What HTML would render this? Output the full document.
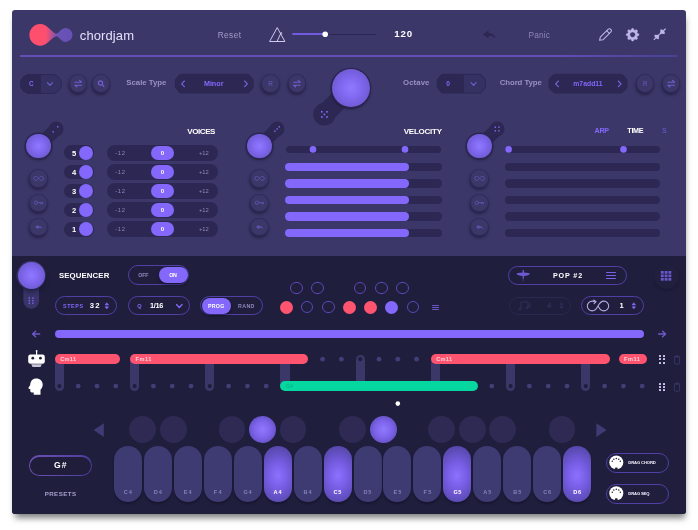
<!DOCTYPE html>
<html><head><meta charset="utf-8"><title>chordjam</title>
<style>
html,body{margin:0;padding:0;background:#fff;}
body{width:698px;height:530px;position:relative;overflow:hidden;font-family:"Liberation Sans",sans-serif;}
#win{position:absolute;left:12px;top:10px;width:674px;height:504px;background:#3b3768;border-radius:3px;box-shadow:1px 6px 6px -2px rgba(0,0,0,.5);overflow:hidden;}
#c{position:absolute;left:-12px;top:-10px;width:698px;height:530px;will-change:transform;}
#c div,#c svg{position:absolute;box-sizing:border-box;}
.t{white-space:nowrap;}
.pill{border-radius:20px;}
.ib{border-radius:50%;background:#3b3768;border:1.6px solid #2f2b59;box-shadow:-0.5px 2px 3px rgba(22,19,50,.6);}
.knob{border-radius:50%;background:radial-gradient(circle at 50% 50%,#9078ff 0%,#8269f2 35%,#6f5ad2 75%,#604eb9 100%);box-shadow:0 0 0 1.2px #2a2650,0 2px 3px rgba(20,18,45,.6);}
.key{border-radius:14px;background:#3e3a72;box-shadow:0 2px 2px rgba(15,13,35,.5);}
.key.on{background:radial-gradient(ellipse 78% 52% at 50% 53%,#8d71ff 0%,#775de4 45%,#5748ac 100%);}
.bk{border-radius:50%;background:#2e2a53;}
.bk.on{background:radial-gradient(circle at 50% 50%,#9179ff 0%,#7c63ea 45%,#5443a8 100%);}
</style></head><body><div id="win"><div id="c">

<svg style="left:26px;top:22px" width="50" height="26" viewBox="26 22 50 26">
<defs><linearGradient id="lg" x1="0" x2="1" y1="0" y2="0"><stop offset="0" stop-color="#ff4f6e"/><stop offset="0.38" stop-color="#ff4f6e"/><stop offset="0.66" stop-color="#6a52b8"/><stop offset="1" stop-color="#6750b4"/></linearGradient></defs>
<path d="M40.200 24.100 A10.800 10.800 0 1 0 40.200 45.700 C47.500 45.700 50.500 38.200 55.500 36.400 C59 35.300 60.300 41.900 65.500 41.900 A7 7 0 1 0 65.500 27.900 C60.300 27.900 59 34.500 55.500 33.400 C50.500 31.600 47.500 24.100 40.200 24.100 Z" fill="url(#lg)"/>
</svg>
<div class="t" style="left:79.8px;top:27.6px;height:15.6px;line-height:15.6px;font-size:13px;color:#e4dffa;font-weight:400;letter-spacing:0.10px;">chordjam</div>
<div class="t" style="left:217.7px;top:29.6px;height:10.0px;line-height:10.0px;font-size:8.3px;color:#a39dca;font-weight:400;letter-spacing:0.41px;">Reset</div>
<svg style="left:267px;top:25px" width="20" height="18" viewBox="267 25 20 18"><g fill="none" stroke="#d6d0f2" stroke-width="0.950" stroke-linejoin="round"><path d="M277.200 27.600 L269.600 41.500 L284.900 41.500 Z"/><path d="M281.400 32 L277 41.500"/><path d="M280.600 34.200 L282.200 33.500"/></g></svg>
<div style="left:292.0px;top:33.6px;width:84.0px;height:1.5px;background:#2b2752;border-radius:1px;"></div>
<div style="left:292.0px;top:33.3px;width:33.0px;height:2.0px;background:#705adf;border-radius:1px;"></div>
<svg style="left:321px;top:30px" width="9" height="9" viewBox="321 30 9 9"><circle cx="325.2" cy="34.2" r="2.8" fill="#fff"/></svg>
<div class="t" style="left:394.2px;top:28.4px;height:11.6px;line-height:11.6px;font-size:9.7px;color:#fff;font-weight:700;letter-spacing:0.90px;">120</div>
<svg style="left:481px;top:29px" width="17" height="11" viewBox="481 29 17 11"><path d="M488.500 30.500 L482.700 34.500 L488.500 38.300 L488.500 35.800 C491.500 35.600 493.500 36.300 495.700 38.300 C494.800 35 492.500 33.200 488.500 33 Z" fill="#2b2752"/></svg>
<div class="t" style="left:528.5px;top:29.5px;height:10.0px;line-height:10.0px;font-size:8.3px;color:#8d87b8;font-weight:400;letter-spacing:0.16px;">Panic</div>
<svg style="left:597px;top:27px" width="17" height="16" viewBox="597 27 17 16"><g fill="none" stroke="#bdb5ea" stroke-width="1.1" stroke-linejoin="round" stroke-linecap="round"><path d="M599.600 40.300 L600.300 37.200 L608.300 29.200 a1.6 1.6 0 0 1 2.300 0 l0.300 0.300 a1.6 1.6 0 0 1 0 2.300 L602.900 39.800 Z"/><path d="M606.800 30.800 L609.300 33.300"/></g></svg>
<svg style="left:624px;top:26px" width="18" height="18" viewBox="624 26 18 18"><path d="M638.87,34.08 L638.87,35.32 L637.29,36.12 L636.92,37.01 L637.47,38.70 L636.60,39.57 L634.91,39.02 L634.02,39.39 L633.22,40.97 L631.98,40.97 L631.18,39.39 L630.29,39.02 L628.60,39.57 L627.73,38.70 L628.28,37.01 L627.91,36.12 L626.33,35.32 L626.33,34.08 L627.91,33.28 L628.28,32.39 L627.73,30.70 L628.60,29.83 L630.29,30.38 L631.18,30.01 L631.98,28.43 L633.22,28.43 L634.02,30.01 L634.91,30.38 L636.60,29.83 L637.47,30.70 L636.92,32.39 L637.29,33.28Z M632.600 31.900 a2.800 2.800 0 1 0 0.001 0 Z" fill="#bdb5ea" fill-rule="evenodd" stroke="#bdb5ea" stroke-width="0.6" stroke-linejoin="round"/></svg>
<svg style="left:652px;top:27px" width="16" height="16" viewBox="652 27 16 16"><g fill="#bdb5ea"><path d="M659.600 34.300 L665.600 28.800" stroke="#bdb5ea" stroke-width="1.200"/><path d="M659.600 34.300 L653.800 39.900" stroke="#bdb5ea" stroke-width="1.200"/><path d="M660.200 33.700 L660.400 29.400 L662.200 29.600 L664.800 32 L664.600 33.900 Z"/><path d="M659 34.900 L658.800 39.200 L657 39 L654.400 36.600 L654.600 34.700 Z"/></g></svg>
<div style="left:20.0px;top:55.3px;width:658.0px;height:2.0px;background:linear-gradient(90deg,#644fba 0%,#644fba 80%,#4a4090 100%);border-radius:1px;"></div>
<div style="left:20.0px;top:74.0px;width:42.0px;height:19.6px;background:#353162;border-radius:10px;border:1px solid #2c2853;"></div>
<div style="left:20.0px;top:74.0px;width:21.0px;height:19.6px;background:#2c2853;border-radius:10px 0 0 10px;"></div>
<div class="t" style="left:-68.7px;width:200px;text-align:center;top:80.1px;height:7.7px;line-height:7.7px;font-size:6.4px;color:#8468fb;font-weight:700;letter-spacing:0px;">C</div>
<svg style="left:44px;top:78px" width="12" height="12" viewBox="44 78 12 12"><path d="M47.5 82.7 L50.0 85.3 L52.5 82.7" fill="none" stroke="#6f5fd0" stroke-width="1.2" stroke-linecap="round" stroke-linejoin="round"/></svg>
<div class="ib" style="left:68.9px;top:74.4px;width:18.6px;height:18.6px;"></div>
<svg style="left:72px;top:77px" width="12" height="12" viewBox="72 77 12 12"><g fill="none" stroke="#6f5fd0" stroke-width="1.1" stroke-linecap="round" stroke-linejoin="round"><path d="M74.9 82.2 H81.5 M79.5 80.4 L81.5 82.2"/><path d="M81.5 85.2 H74.9 M76.9 87.0 L74.9 85.2"/></g></svg>
<div class="ib" style="left:91.9px;top:74.4px;width:18.6px;height:18.6px;"></div>
<svg style="left:95px;top:77px" width="13" height="13" viewBox="95 77 13 13"><g fill="none" stroke="#6f5fd0" stroke-width="1.2" stroke-linecap="round"><circle cx="100.500" cy="83" r="2.100"/><path d="M102.200 84.700 L104 86.600"/></g></svg>
<div class="t" style="left:126.3px;top:78.3px;height:9.4px;line-height:9.4px;font-size:7.8px;color:#9791c3;font-weight:700;letter-spacing:0.00px;">Scale Type</div>
<svg style="left:173px;top:72px" width="82" height="22" viewBox="173 72 82 22"><path d="M176.8 80.3 L180.6 75.7 L248.0 75.7 L251.8 80.3 L251.8 86.8 L248.0 91.4 L180.6 91.4 L176.8 86.8Z" fill="#2c2853" stroke="#2c2853" stroke-width="4.0" stroke-linejoin="round"/></svg>
<svg style="left:177px;top:77px" width="12" height="12" viewBox="177 77 12 12"><path d="M184.4 81.0 L181.6 83.8 L184.4 86.6" fill="none" stroke="#7564de" stroke-width="1.15" stroke-linecap="round" stroke-linejoin="round"/></svg>
<svg style="left:240px;top:77px" width="12" height="12" viewBox="240 77 12 12"><path d="M244.6 81.0 L247.4 83.8 L244.6 86.6" fill="none" stroke="#7564de" stroke-width="1.15" stroke-linecap="round" stroke-linejoin="round"/></svg>
<div class="t" style="left:203.9px;top:79.5px;height:8.6px;line-height:8.6px;font-size:7.2px;color:#8468fb;font-weight:700;letter-spacing:0.00px;">Minor</div>
<div class="ib" style="left:261.2px;top:74.4px;width:18.6px;height:18.6px;"></div>
<div class="t" style="left:170.6px;width:200px;text-align:center;top:79.9px;height:7.8px;line-height:7.8px;font-size:6.5px;color:#5a4fa3;font-weight:700;letter-spacing:0px;">R</div>
<div class="ib" style="left:287.6px;top:74.4px;width:18.6px;height:18.6px;"></div>
<svg style="left:290px;top:77px" width="12" height="12" viewBox="290 77 12 12"><g fill="none" stroke="#6f5fd0" stroke-width="1.1" stroke-linecap="round" stroke-linejoin="round"><path d="M293.6 82.2 H300.2 M298.2 80.4 L300.2 82.2"/><path d="M300.2 85.2 H293.6 M295.6 87.0 L293.6 85.2"/></g></svg>
<svg style="left:300px;top:60px" width="80" height="70" viewBox="300 60 80 70"><path d="M350.700 88.200 L324.400 114.400" stroke="#2c2853" stroke-width="19.500" stroke-linecap="round"/><circle cx="324.400" cy="114.300" r="11.200" fill="#2c2853"/><circle cx="350.700" cy="88.400" r="20.300" fill="#2a2650"/><g fill="#8468fb"><rect x="321" y="111" width="1.600" height="1.600"/><rect x="326.200" y="111" width="1.600" height="1.600"/><rect x="323.600" y="113.600" width="1.600" height="1.600"/><rect x="321" y="116.200" width="1.600" height="1.600"/><rect x="326.200" y="116.200" width="1.600" height="1.600"/></g></svg>
<div class="knob" style="left:331.7px;top:69.2px;width:38.0px;height:38.0px;"></div>
<div class="t" style="left:403.0px;top:78.3px;height:9.4px;line-height:9.4px;font-size:7.8px;color:#9791c3;font-weight:700;letter-spacing:0.08px;">Octave</div>
<svg style="left:435px;top:72px" width="52" height="22" viewBox="435 72 52 22"><path d="M438.7 80.3 L442.5 75.7 L480.0 75.7 L483.8 80.3 L483.8 86.8 L480.0 91.4 L442.5 91.4 L438.7 86.8Z" fill="#2c2853" stroke="#2c2853" stroke-width="4.0" stroke-linejoin="round"/><defs><mask id="hx1"><path d="M438.7 80.3 L442.5 75.7 L480.0 75.7 L483.8 80.3 L483.8 86.8 L480.0 91.4 L442.5 91.4 L438.7 86.8Z" fill="#fff" stroke="#fff" stroke-width="2.0" stroke-linejoin="round"/></mask></defs><rect x="463.8" y="73.7" width="22.0" height="19.700000000000003" fill="#353162" mask="url(#hx1)"/></svg>
<div class="t" style="left:348.0px;width:200px;text-align:center;top:79.9px;height:7.9px;line-height:7.9px;font-size:6.6px;color:#8468fb;font-weight:700;letter-spacing:0px;">0</div>
<svg style="left:467px;top:78px" width="12" height="12" viewBox="467 78 12 12"><path d="M471.1 82.7 L473.6 85.3 L476.1 82.7" fill="none" stroke="#6f5fd0" stroke-width="1.2" stroke-linecap="round" stroke-linejoin="round"/></svg>
<div class="t" style="left:499.7px;top:78.3px;height:9.4px;line-height:9.4px;font-size:7.8px;color:#9791c3;font-weight:700;letter-spacing:-0.07px;">Chord Type</div>
<svg style="left:547px;top:72px" width="82" height="22" viewBox="547 72 82 22"><path d="M551.7 80.3 L555.3 76.9 L620.7 76.9 L624.3 80.3 L624.3 86.8 L620.7 90.2 L555.3 90.2 L551.7 86.8Z" fill="#2c2853" stroke="#2c2853" stroke-width="6.4" stroke-linejoin="round"/></svg>
<svg style="left:551px;top:77px" width="12" height="12" viewBox="551 77 12 12"><path d="M558.4 81.0 L555.6 83.8 L558.4 86.6" fill="none" stroke="#7564de" stroke-width="1.15" stroke-linecap="round" stroke-linejoin="round"/></svg>
<svg style="left:613px;top:77px" width="12" height="12" viewBox="613 77 12 12"><path d="M618.3 81.0 L621.1 83.8 L618.3 86.6" fill="none" stroke="#7564de" stroke-width="1.15" stroke-linecap="round" stroke-linejoin="round"/></svg>
<div class="t" style="left:573.3px;top:79.7px;height:8.2px;line-height:8.2px;font-size:6.8px;color:#8468fb;font-weight:700;letter-spacing:0.03px;">m7add11</div>
<div class="ib" style="left:635.6px;top:74.4px;width:18.6px;height:18.6px;"></div>
<div class="t" style="left:545.0px;width:200px;text-align:center;top:79.9px;height:7.8px;line-height:7.8px;font-size:6.5px;color:#5a4fa3;font-weight:700;letter-spacing:0px;">R</div>
<div class="ib" style="left:661.9px;top:74.4px;width:18.6px;height:18.6px;"></div>
<svg style="left:665px;top:77px" width="12" height="12" viewBox="665 77 12 12"><g fill="none" stroke="#6f5fd0" stroke-width="1.1" stroke-linecap="round" stroke-linejoin="round"><path d="M667.9 82.2 H674.5 M672.5 80.4 L674.5 82.2"/><path d="M674.5 85.2 H667.9 M669.9 87.0 L667.9 85.2"/></g></svg>
<svg style="left:18px;top:115px" width="50" height="50" viewBox="18 115 50 50"><path d="M38.6 146.2 L56.2 129" stroke="#2c2853" stroke-width="13.200" stroke-linecap="round"/><circle cx="56.2" cy="129" r="7.400" fill="#2c2853"/><g fill="#8468fb"><rect x="57.0" y="126.1" width="1.400" height="1.400"/><rect x="52.5" y="131.1" width="1.400" height="1.400"/></g></svg>
<div class="knob" style="left:26.4px;top:134.0px;width:24.4px;height:24.4px;box-shadow:0 0 0 1.600px #2a2650,0 2px 3px rgba(20,18,45,.6);"></div>
<div class="ib" style="left:29.4px;top:169.2px;width:18.4px;height:18.4px;"></div>
<div class="ib" style="left:29.4px;top:193.5px;width:18.4px;height:18.4px;"></div>
<div class="ib" style="left:29.4px;top:218.0px;width:18.4px;height:18.4px;"></div>
<svg style="left:31px;top:173px" width="14" height="10" viewBox="31 173 14 10"><path d="M38.6 178.4 c1 -1.300 1.700 -2 2.800 -2 a2 2 0 0 1 0 4 c-1.100 0 -1.800 -0.700 -2.800 -2 c-1 -1.300 -1.700 -2 -2.800 -2 a2 2 0 0 0 0 4 c1.100 0 1.800 -0.700 2.800 -2z" fill="none" stroke="#5d53ad" stroke-width="0.9"/></svg>
<svg style="left:31px;top:197px" width="14" height="10" viewBox="31 197 14 10"><g fill="none" stroke="#5d53ad" stroke-width="0.9" stroke-linecap="round"><circle cx="36.0" cy="202.7" r="1.700"/><path d="M37.7 202.7 H42.8 M40.8 202.7 v1.300 M42.4 202.7 v1.300"/></g></svg>
<svg style="left:31px;top:222px" width="14" height="10" viewBox="31 222 14 10"><path d="M38.3 224.8 L35.0 227.0 L38.3 229.2 L38.3 227.7 C40.1 227.6 41.2 228.0 42.4 229.1 C41.9 227.2 40.6 226.2 38.3 226.1 Z" fill="#5d53ad"/></svg>
<svg style="left:239px;top:115px" width="50" height="50" viewBox="239 115 50 50"><path d="M259.5 146.2 L277.1 129" stroke="#2c2853" stroke-width="13.200" stroke-linecap="round"/><circle cx="277.1" cy="129" r="7.400" fill="#2c2853"/><g fill="#8468fb"><rect x="278.6" y="126.1" width="1.400" height="1.400"/><rect x="276.4" y="128.3" width="1.400" height="1.400"/><rect x="274.2" y="130.5" width="1.400" height="1.400"/></g></svg>
<div class="knob" style="left:247.3px;top:134.0px;width:24.4px;height:24.4px;box-shadow:0 0 0 1.600px #2a2650,0 2px 3px rgba(20,18,45,.6);"></div>
<div class="ib" style="left:250.3px;top:169.2px;width:18.4px;height:18.4px;"></div>
<div class="ib" style="left:250.3px;top:193.5px;width:18.4px;height:18.4px;"></div>
<div class="ib" style="left:250.3px;top:218.0px;width:18.4px;height:18.4px;"></div>
<svg style="left:252px;top:173px" width="14" height="10" viewBox="252 173 14 10"><path d="M259.5 178.4 c1 -1.300 1.700 -2 2.800 -2 a2 2 0 0 1 0 4 c-1.100 0 -1.800 -0.700 -2.800 -2 c-1 -1.300 -1.700 -2 -2.800 -2 a2 2 0 0 0 0 4 c1.100 0 1.800 -0.700 2.800 -2z" fill="none" stroke="#5d53ad" stroke-width="0.9"/></svg>
<svg style="left:252px;top:197px" width="14" height="10" viewBox="252 197 14 10"><g fill="none" stroke="#5d53ad" stroke-width="0.9" stroke-linecap="round"><circle cx="256.9" cy="202.7" r="1.700"/><path d="M258.6 202.7 H263.7 M261.7 202.7 v1.300 M263.3 202.7 v1.300"/></g></svg>
<svg style="left:252px;top:222px" width="14" height="10" viewBox="252 222 14 10"><path d="M259.2 224.8 L255.9 227.0 L259.2 229.2 L259.2 227.7 C261.0 227.6 262.1 228.0 263.3 229.1 C262.8 227.2 261.5 226.2 259.2 226.1 Z" fill="#5d53ad"/></svg>
<svg style="left:459px;top:115px" width="50" height="50" viewBox="459 115 50 50"><path d="M479.5 146.2 L497.1 129" stroke="#2c2853" stroke-width="13.200" stroke-linecap="round"/><circle cx="497.1" cy="129" r="7.400" fill="#2c2853"/><g fill="#8468fb"><rect x="494.6" y="126.5" width="1.400" height="1.400"/><rect x="498.2" y="126.5" width="1.400" height="1.400"/><rect x="494.6" y="130.1" width="1.400" height="1.400"/><rect x="498.2" y="130.1" width="1.400" height="1.400"/></g></svg>
<div class="knob" style="left:467.3px;top:134.0px;width:24.4px;height:24.4px;box-shadow:0 0 0 1.600px #2a2650,0 2px 3px rgba(20,18,45,.6);"></div>
<div class="ib" style="left:470.3px;top:169.2px;width:18.4px;height:18.4px;"></div>
<div class="ib" style="left:470.3px;top:193.5px;width:18.4px;height:18.4px;"></div>
<div class="ib" style="left:470.3px;top:218.0px;width:18.4px;height:18.4px;"></div>
<svg style="left:472px;top:173px" width="14" height="10" viewBox="472 173 14 10"><path d="M479.5 178.4 c1 -1.300 1.700 -2 2.800 -2 a2 2 0 0 1 0 4 c-1.100 0 -1.800 -0.700 -2.800 -2 c-1 -1.300 -1.700 -2 -2.800 -2 a2 2 0 0 0 0 4 c1.100 0 1.800 -0.700 2.800 -2z" fill="none" stroke="#5d53ad" stroke-width="0.9"/></svg>
<svg style="left:472px;top:197px" width="14" height="10" viewBox="472 197 14 10"><g fill="none" stroke="#5d53ad" stroke-width="0.9" stroke-linecap="round"><circle cx="476.9" cy="202.7" r="1.700"/><path d="M478.6 202.7 H483.7 M481.7 202.7 v1.300 M483.3 202.7 v1.300"/></g></svg>
<svg style="left:472px;top:222px" width="14" height="10" viewBox="472 222 14 10"><path d="M479.2 224.8 L475.9 227.0 L479.2 229.2 L479.2 227.7 C481.0 227.6 482.1 228.0 483.3 229.1 C482.8 227.2 481.5 226.2 479.2 226.1 Z" fill="#5d53ad"/></svg>
<div class="t" style="left:187.3px;top:127.0px;height:9.6px;line-height:9.6px;font-size:8px;color:#fff;font-weight:700;letter-spacing:-0.43px;">VOICES</div>
<div class="t" style="left:403.8px;top:127.0px;height:9.6px;line-height:9.6px;font-size:8px;color:#fff;font-weight:700;letter-spacing:-0.26px;">VELOCITY</div>
<div class="t" style="left:594.6px;top:126.7px;height:8.6px;line-height:8.6px;font-size:7.2px;color:#8468fb;font-weight:700;letter-spacing:-0.30px;">ARP</div>
<div class="t" style="left:627.3px;top:126.7px;height:8.6px;line-height:8.6px;font-size:7.2px;color:#fff;font-weight:700;letter-spacing:-0.30px;">TIME</div>
<div class="t" style="left:662.0px;top:126.7px;height:8.6px;line-height:8.6px;font-size:7.2px;color:#5f51b8;font-weight:700;letter-spacing:0.00px;">S</div>
<div style="left:64.2px;top:145.4px;width:29.6px;height:14.8px;background:#2c2853;border-radius:8px;"></div>
<div class="t" style="left:-26.0px;width:200px;text-align:center;top:148.5px;height:9.1px;line-height:9.1px;font-size:7.6px;color:#fff;font-weight:700;letter-spacing:0px;">5</div>
<div style="left:79.3px;top:145.9px;width:13.8px;height:13.8px;background:#8468fb;border-radius:50%;"></div>
<div style="left:107.3px;top:145.0px;width:110.7px;height:15.6px;background:#2c2853;border-radius:8px;"></div>
<div class="t" style="left:115.2px;top:149.6px;height:7.0px;line-height:7.0px;font-size:5.8px;color:#8e88bd;font-weight:400;letter-spacing:0.71px;">-12</div>
<div class="t" style="left:199.0px;top:149.6px;height:7.0px;line-height:7.0px;font-size:5.8px;color:#8e88bd;font-weight:400;letter-spacing:-0.07px;">+12</div>
<div style="left:150.6px;top:146.0px;width:23.5px;height:13.6px;background:#8468fb;border-radius:7px;"></div>
<div class="t" style="left:62.4px;width:200px;text-align:center;top:149.5px;height:7.2px;line-height:7.2px;font-size:6px;color:#fff;font-weight:700;letter-spacing:0px;">0</div>
<div style="left:64.2px;top:164.5px;width:29.6px;height:14.8px;background:#2c2853;border-radius:8px;"></div>
<div class="t" style="left:-26.0px;width:200px;text-align:center;top:167.5px;height:9.1px;line-height:9.1px;font-size:7.6px;color:#fff;font-weight:700;letter-spacing:0px;">4</div>
<div style="left:79.3px;top:165.0px;width:13.8px;height:13.8px;background:#8468fb;border-radius:50%;"></div>
<div style="left:107.3px;top:164.1px;width:110.7px;height:15.6px;background:#2c2853;border-radius:8px;"></div>
<div class="t" style="left:115.2px;top:168.6px;height:7.0px;line-height:7.0px;font-size:5.8px;color:#8e88bd;font-weight:400;letter-spacing:0.71px;">-12</div>
<div class="t" style="left:199.0px;top:168.6px;height:7.0px;line-height:7.0px;font-size:5.8px;color:#8e88bd;font-weight:400;letter-spacing:-0.07px;">+12</div>
<div style="left:150.6px;top:165.1px;width:23.5px;height:13.6px;background:#8468fb;border-radius:7px;"></div>
<div class="t" style="left:62.4px;width:200px;text-align:center;top:168.5px;height:7.2px;line-height:7.2px;font-size:6px;color:#fff;font-weight:700;letter-spacing:0px;">0</div>
<div style="left:64.2px;top:183.6px;width:29.6px;height:14.8px;background:#2c2853;border-radius:8px;"></div>
<div class="t" style="left:-26.0px;width:200px;text-align:center;top:186.5px;height:9.1px;line-height:9.1px;font-size:7.6px;color:#fff;font-weight:700;letter-spacing:0px;">3</div>
<div style="left:79.3px;top:184.1px;width:13.8px;height:13.8px;background:#8468fb;border-radius:50%;"></div>
<div style="left:107.3px;top:183.2px;width:110.7px;height:15.6px;background:#2c2853;border-radius:8px;"></div>
<div class="t" style="left:115.2px;top:187.6px;height:7.0px;line-height:7.0px;font-size:5.8px;color:#8e88bd;font-weight:400;letter-spacing:0.71px;">-12</div>
<div class="t" style="left:199.0px;top:187.6px;height:7.0px;line-height:7.0px;font-size:5.8px;color:#8e88bd;font-weight:400;letter-spacing:-0.07px;">+12</div>
<div style="left:150.6px;top:184.2px;width:23.5px;height:13.6px;background:#8468fb;border-radius:7px;"></div>
<div class="t" style="left:62.4px;width:200px;text-align:center;top:187.5px;height:7.2px;line-height:7.2px;font-size:6px;color:#fff;font-weight:700;letter-spacing:0px;">0</div>
<div style="left:64.2px;top:202.7px;width:29.6px;height:14.8px;background:#2c2853;border-radius:8px;"></div>
<div class="t" style="left:-26.0px;width:200px;text-align:center;top:205.5px;height:9.1px;line-height:9.1px;font-size:7.6px;color:#fff;font-weight:700;letter-spacing:0px;">2</div>
<div style="left:79.3px;top:203.2px;width:13.8px;height:13.8px;background:#8468fb;border-radius:50%;"></div>
<div style="left:107.3px;top:202.3px;width:110.7px;height:15.6px;background:#2c2853;border-radius:8px;"></div>
<div class="t" style="left:115.2px;top:206.6px;height:7.0px;line-height:7.0px;font-size:5.8px;color:#8e88bd;font-weight:400;letter-spacing:0.71px;">-12</div>
<div class="t" style="left:199.0px;top:206.6px;height:7.0px;line-height:7.0px;font-size:5.8px;color:#8e88bd;font-weight:400;letter-spacing:-0.07px;">+12</div>
<div style="left:150.6px;top:203.3px;width:23.5px;height:13.6px;background:#8468fb;border-radius:7px;"></div>
<div class="t" style="left:62.4px;width:200px;text-align:center;top:206.5px;height:7.2px;line-height:7.2px;font-size:6px;color:#fff;font-weight:700;letter-spacing:0px;">0</div>
<div style="left:64.2px;top:221.8px;width:29.6px;height:14.8px;background:#2c2853;border-radius:8px;"></div>
<div class="t" style="left:-26.0px;width:200px;text-align:center;top:224.5px;height:9.1px;line-height:9.1px;font-size:7.6px;color:#fff;font-weight:700;letter-spacing:0px;">1</div>
<div style="left:79.3px;top:222.3px;width:13.8px;height:13.8px;background:#8468fb;border-radius:50%;"></div>
<div style="left:107.3px;top:221.4px;width:110.7px;height:15.6px;background:#2c2853;border-radius:8px;"></div>
<div class="t" style="left:115.2px;top:225.6px;height:7.0px;line-height:7.0px;font-size:5.8px;color:#8e88bd;font-weight:400;letter-spacing:0.71px;">-12</div>
<div class="t" style="left:199.0px;top:225.6px;height:7.0px;line-height:7.0px;font-size:5.8px;color:#8e88bd;font-weight:400;letter-spacing:-0.07px;">+12</div>
<div style="left:150.6px;top:222.4px;width:23.5px;height:13.6px;background:#8468fb;border-radius:7px;"></div>
<div class="t" style="left:62.4px;width:200px;text-align:center;top:225.5px;height:7.2px;line-height:7.2px;font-size:6px;color:#fff;font-weight:700;letter-spacing:0px;">0</div>
<div style="left:285.8px;top:145.6px;width:155.7px;height:7.6px;background:#2c2853;border-radius:4px;"></div>
<svg style="left:308px;top:145px" width="10" height="10" viewBox="308 145 10 10"><circle cx="313.0" cy="149.4" r="3.3" fill="#8468fb"/></svg>
<svg style="left:400px;top:145px" width="10" height="10" viewBox="400 145 10 10"><circle cx="405.0" cy="149.4" r="3.3" fill="#8468fb"/></svg>
<div style="left:285.0px;top:162.9px;width:156.5px;height:8.4px;background:#2c2853;border-radius:4.200px;"></div>
<div style="left:285.0px;top:162.9px;width:124.0px;height:8.4px;background:#8468fb;border-radius:4.200px;"></div>
<div style="left:285.0px;top:179.3px;width:156.5px;height:8.4px;background:#2c2853;border-radius:4.200px;"></div>
<div style="left:285.0px;top:179.3px;width:124.0px;height:8.4px;background:#8468fb;border-radius:4.200px;"></div>
<div style="left:285.0px;top:195.8px;width:156.5px;height:8.4px;background:#2c2853;border-radius:4.200px;"></div>
<div style="left:285.0px;top:195.8px;width:124.0px;height:8.4px;background:#8468fb;border-radius:4.200px;"></div>
<div style="left:285.0px;top:212.2px;width:156.5px;height:8.4px;background:#2c2853;border-radius:4.200px;"></div>
<div style="left:285.0px;top:212.2px;width:124.0px;height:8.4px;background:#8468fb;border-radius:4.200px;"></div>
<div style="left:285.0px;top:228.6px;width:156.5px;height:8.4px;background:#2c2853;border-radius:4.200px;"></div>
<div style="left:285.0px;top:228.6px;width:124.0px;height:8.4px;background:#8468fb;border-radius:4.200px;"></div>
<div style="left:504.8px;top:145.6px;width:155.6px;height:7.6px;background:#2c2853;border-radius:4px;"></div>
<svg style="left:504px;top:145px" width="10" height="10" viewBox="504 145 10 10"><circle cx="508.6" cy="149.4" r="3.3" fill="#8468fb"/></svg>
<svg style="left:619px;top:145px" width="10" height="10" viewBox="619 145 10 10"><circle cx="623.5" cy="149.4" r="3.3" fill="#8468fb"/></svg>
<div style="left:504.8px;top:162.9px;width:155.6px;height:8.4px;background:#2c2853;border-radius:4.200px;"></div>
<div style="left:504.8px;top:179.3px;width:155.6px;height:8.4px;background:#2c2853;border-radius:4.200px;"></div>
<div style="left:504.8px;top:195.8px;width:155.6px;height:8.4px;background:#2c2853;border-radius:4.200px;"></div>
<div style="left:504.8px;top:212.2px;width:155.6px;height:8.4px;background:#2c2853;border-radius:4.200px;"></div>
<div style="left:504.8px;top:228.6px;width:155.6px;height:8.4px;background:#2c2853;border-radius:4.200px;"></div>
<div style="left:12.0px;top:255.8px;width:674.0px;height:260.0px;background:#1f1e3c;"></div>
<svg style="left:12px;top:256px" width="40" height="56" viewBox="12 256 40 56"><circle cx="31.200" cy="275.600" r="14.800" fill="#39356a"/><path d="M31.200 280 V301" stroke="#39356a" stroke-width="15.600" stroke-linecap="round"/><g fill="#8468fb" opacity="0.85"><rect x="28.600" y="297.300" width="1.400" height="1.600"/><rect x="28.600" y="299.900" width="1.400" height="1.600"/><rect x="28.600" y="302.500" width="1.400" height="1.600"/><rect x="32.200" y="297.300" width="1.400" height="1.600"/><rect x="32.200" y="299.900" width="1.400" height="1.600"/><rect x="32.200" y="302.500" width="1.400" height="1.600"/></g></svg>
<div class="knob" style="left:17.5px;top:261.7px;width:27.4px;height:27.4px;box-shadow:0 3px 5px rgba(18,16,42,.6);"></div>
<div class="t" style="left:59.0px;top:270.7px;height:9.4px;line-height:9.4px;font-size:7.8px;color:#fff;font-weight:700;letter-spacing:0.11px;">SEQUENCER</div>
<div style="left:128.0px;top:265.3px;width:61.0px;height:19.8px;border:1.3px solid #5040a6;border-radius:10px;"></div>
<div style="left:158.6px;top:267.4px;width:29.4px;height:15.8px;background:#8468fb;border-radius:8px;box-shadow:0 2px 3px rgba(10,8,30,.45);"></div>
<div class="t" style="left:138.3px;top:272.2px;height:6.4px;line-height:6.4px;font-size:5.3px;color:#8e88bd;font-weight:700;letter-spacing:-0.25px;">OFF</div>
<div class="t" style="left:169.2px;top:272.2px;height:6.4px;line-height:6.4px;font-size:5.3px;color:#fff;font-weight:700;letter-spacing:-0.35px;">ON</div>
<div style="left:54.9px;top:296.1px;width:62.0px;height:19.3px;border:1.3px solid #5040a6;border-radius:10px;"></div>
<div class="t" style="left:63.0px;top:302.8px;height:6.5px;line-height:6.5px;font-size:5.4px;color:#8468fb;font-weight:700;letter-spacing:0.60px;">STEPS</div>
<div class="t" style="left:89.7px;top:301.2px;height:9.2px;line-height:9.2px;font-size:7.7px;color:#fff;font-weight:700;letter-spacing:1.25px;">32</div>
<svg style="left:102px;top:299px" width="8" height="12" viewBox="102 299 8 12"><path d="M105.1 304.9 L106.8 302.7 L108.5 304.9 Z M105.1 306.7 L106.8 308.9 L108.5 306.7 Z" fill="#8468fb" stroke="#8468fb" stroke-width="0.600" stroke-linejoin="round"/></svg>
<div style="left:128.0px;top:296.1px;width:61.8px;height:19.3px;border:1.3px solid #5040a6;border-radius:10px;"></div>
<div class="t" style="left:39.4px;width:200px;text-align:center;top:302.6px;height:6.7px;line-height:6.7px;font-size:5.6px;color:#8468fb;font-weight:700;letter-spacing:0px;">Q</div>
<div class="t" style="left:150.0px;top:302.0px;height:8.9px;line-height:8.9px;font-size:7.4px;color:#fff;font-weight:700;letter-spacing:-0.36px;">1/16</div>
<svg style="left:173px;top:300px" width="12" height="12" viewBox="173 300 12 12"><path d="M176.5 304.5 L179.3 307.5 L182.1 304.5" fill="none" stroke="#8468fb" stroke-width="1.3" stroke-linecap="round" stroke-linejoin="round"/></svg>
<div style="left:200.0px;top:296.1px;width:62.8px;height:19.3px;border:1.3px solid #5040a6;border-radius:10px;"></div>
<div style="left:201.8px;top:298.0px;width:29.6px;height:15.6px;background:#8468fb;border-radius:8px;box-shadow:0 2px 3px rgba(10,8,30,.45);"></div>
<div class="t" style="left:207.9px;top:302.7px;height:6.4px;line-height:6.4px;font-size:5.3px;color:#fff;font-weight:700;letter-spacing:0.26px;">PROG</div>
<div class="t" style="left:238.1px;top:302.7px;height:6.4px;line-height:6.4px;font-size:5.3px;color:#8e88bd;font-weight:700;letter-spacing:0.33px;">RAND</div>
<div style="left:290.1px;top:281.9px;width:12.6px;height:12.6px;border:1.2px solid #5a49b6;border-radius:50%;"></div>
<div style="left:311.4px;top:281.9px;width:12.6px;height:12.6px;border:1.2px solid #5a49b6;border-radius:50%;"></div>
<div style="left:353.9px;top:281.9px;width:12.6px;height:12.6px;border:1.2px solid #5a49b6;border-radius:50%;"></div>
<div style="left:375.2px;top:281.9px;width:12.6px;height:12.6px;border:1.2px solid #5a49b6;border-radius:50%;"></div>
<div style="left:396.3px;top:281.9px;width:12.6px;height:12.6px;border:1.2px solid #5a49b6;border-radius:50%;"></div>
<div style="left:279.6px;top:300.5px;width:13.0px;height:13.0px;background:#ff5470;border-radius:50%;"></div>
<div style="left:300.9px;top:300.7px;width:12.6px;height:12.6px;border:1.2px solid #5a49b6;border-radius:50%;"></div>
<div style="left:322.1px;top:300.7px;width:12.6px;height:12.6px;border:1.2px solid #5a49b6;border-radius:50%;"></div>
<div style="left:343.1px;top:300.5px;width:13.0px;height:13.0px;background:#ff5470;border-radius:50%;"></div>
<div style="left:364.2px;top:300.5px;width:13.0px;height:13.0px;background:#ff5470;border-radius:50%;"></div>
<div style="left:385.4px;top:300.5px;width:13.0px;height:13.0px;background:#8468fb;border-radius:50%;"></div>
<div style="left:406.7px;top:300.7px;width:12.6px;height:12.6px;border:1.2px solid #5a49b6;border-radius:50%;"></div>
<div style="left:432.0px;top:304.6px;width:7.0px;height:1.1px;background:#6a58c8;border-radius:1px;"></div>
<div style="left:432.0px;top:306.9px;width:7.0px;height:1.1px;background:#6a58c8;border-radius:1px;"></div>
<div style="left:432.0px;top:309.3px;width:7.0px;height:1.1px;background:#6a58c8;border-radius:1px;"></div>
<div style="left:508.1px;top:265.5px;width:119.2px;height:19.4px;border:1.3px solid #5040a6;border-radius:10px;"></div>
<svg style="left:515px;top:268px" width="16" height="16" viewBox="515 268 16 16"><g fill="#6f59d2"><path d="M516.800 273.300 Q523.200 271.500 529.600 273.300 L529.500 274.500 Q523.200 277.600 516.900 274.500 Z"/><rect x="522.600" y="270" width="1.300" height="8.500"/><rect x="522.600" y="278.500" width="1.300" height="2.800" opacity="0.400"/></g></svg>
<div class="t" style="left:552.9px;top:271.5px;height:8.6px;line-height:8.6px;font-size:7.2px;color:#fff;font-weight:700;letter-spacing:0.84px;">POP #2</div>
<div style="left:606.0px;top:271.6px;width:9.5px;height:1.3px;background:#7a63e6;border-radius:1px;"></div>
<div style="left:606.0px;top:274.6px;width:9.5px;height:1.3px;background:#7a63e6;border-radius:1px;"></div>
<div style="left:606.0px;top:277.6px;width:9.5px;height:1.3px;background:#7a63e6;border-radius:1px;"></div>
<div style="left:508.6px;top:296.5px;width:62.2px;height:18.3px;border:1.2px solid #2c2850;border-radius:9.200px;"></div>
<svg style="left:517px;top:299px" width="18" height="13" viewBox="517 299 18 13"><g fill="none" stroke="#332f5c" stroke-width="0.900"><path d="M521 309 V302 H528 V308"/><circle cx="520" cy="309" r="1"/><circle cx="527" cy="308" r="1"/><path d="M530 303 V306"/><circle cx="529.300" cy="306.200" r="0.700"/></g></svg>
<div class="t" style="left:449.0px;width:200px;text-align:center;top:301.1px;height:9.0px;line-height:9.0px;font-size:7.5px;color:#353160;font-weight:700;letter-spacing:0px;">4</div>
<svg style="left:557px;top:299px" width="8" height="12" viewBox="557 299 8 12"><path d="M559.9 304.7 L561.6 302.5 L563.3 304.7 Z M559.9 306.5 L561.6 308.7 L563.3 306.5 Z" fill="#312d59" stroke="#312d59" stroke-width="0.600" stroke-linejoin="round"/></svg>
<div style="left:581.0px;top:296.1px;width:62.6px;height:19.3px;border:1.3px solid #5040a6;border-radius:10px;"></div>
<svg style="left:585px;top:299px" width="26" height="14" viewBox="585 299 26 14"><path d="M595.200 302 c-0.900 -0.600 -1.900 -0.900 -3 -0.900 a4.900 4.900 0 0 0 0 9.800 c2.600 0 4.200 -1.800 5.800 -4.900 c1.600 -3.100 3.200 -4.900 5.800 -4.900 a4.900 4.900 0 0 1 0 9.800 c-2.600 0 -4.200 -1.800 -5.800 -4.900" fill="none" stroke="#b3aae6" stroke-width="1.100" stroke-linecap="round"/><path d="M593.700 300 l2.400 1.600 l-2 2" fill="none" stroke="#b3aae6" stroke-width="1.100" stroke-linecap="round" stroke-linejoin="round"/></svg>
<div class="t" style="left:521.7px;width:200px;text-align:center;top:301.2px;height:9.0px;line-height:9.0px;font-size:7.5px;color:#fff;font-weight:700;letter-spacing:0px;">1</div>
<svg style="left:629px;top:299px" width="8" height="12" viewBox="629 299 8 12"><path d="M632.1 304.9 L633.8 302.7 L635.5 304.9 Z M632.1 306.7 L633.8 308.9 L635.5 306.7 Z" fill="#8468fb" stroke="#8468fb" stroke-width="0.600" stroke-linejoin="round"/></svg>
<div style="left:653.7px;top:263.5px;width:25.0px;height:25.0px;border-radius:50%;background:#201f3d;box-shadow:0 2px 3px rgba(10,8,30,.22);"></div>
<svg style="left:658px;top:268px" width="16" height="16" viewBox="658 268 16 16"><g fill="#6858cc"><rect x="660.8" y="271.0" width="2.900" height="2.700"/><rect x="664.6" y="271.0" width="2.900" height="2.700"/><rect x="668.4" y="271.0" width="2.900" height="2.700"/><rect x="660.8" y="274.5" width="2.900" height="2.700"/><rect x="664.6" y="274.5" width="2.900" height="2.700"/><rect x="668.4" y="274.5" width="2.900" height="2.700"/><rect x="660.8" y="278.0" width="2.900" height="2.700"/><rect x="664.6" y="278.0" width="2.900" height="2.700"/><rect x="668.4" y="278.0" width="2.900" height="2.700"/></g></svg>
<svg style="left:30px;top:329px" width="12" height="10" viewBox="30 329 12 10"><path d="M39.6 334.0 H32.8 M35.6 331.2 L32.6 334.0 L35.6 336.8" fill="none" stroke="#6a58c8" stroke-width="1.500" stroke-linecap="round" stroke-linejoin="round"/></svg>
<svg style="left:656px;top:329px" width="12" height="10" viewBox="656 329 12 10"><path d="M658.6 334.0 H665.4 M662.6 331.2 L665.6 334.0 L662.6 336.8" fill="none" stroke="#6a58c8" stroke-width="1.500" stroke-linecap="round" stroke-linejoin="round"/></svg>
<div style="left:54.5px;top:329.7px;width:589.6px;height:8.6px;background:#8468fb;border-radius:4.300px;"></div>
<div style="left:54.8px;top:359.2px;width:9.2px;height:32.2px;background:#3b3768;border-radius:0 0 4.600px 4.600px;"></div>
<svg style="left:56px;top:383px" width="8" height="8" viewBox="56 383 8 8"><circle cx="59.4" cy="386.1" r="2.1" fill="#1f1e3c"/></svg>
<div style="left:130.0px;top:359.2px;width:9.2px;height:32.2px;background:#3b3768;border-radius:0 0 4.600px 4.600px;"></div>
<svg style="left:131px;top:383px" width="8" height="8" viewBox="131 383 8 8"><circle cx="134.6" cy="386.1" r="2.1" fill="#1f1e3c"/></svg>
<div style="left:205.2px;top:359.2px;width:9.2px;height:32.2px;background:#3b3768;border-radius:0 0 4.600px 4.600px;"></div>
<svg style="left:206px;top:383px" width="8" height="8" viewBox="206 383 8 8"><circle cx="209.8" cy="386.1" r="2.1" fill="#1f1e3c"/></svg>
<div style="left:280.4px;top:359.2px;width:9.2px;height:26.9px;background:#3b3768;"></div>
<div style="left:355.6px;top:354.5px;width:9.2px;height:31.6px;background:#3b3768;border-radius:4.600px 4.600px 0 0;"></div>
<svg style="left:357px;top:356px" width="8" height="8" viewBox="357 356 8 8"><circle cx="360.2" cy="359.2" r="2.1" fill="#1f1e3c"/></svg>
<div style="left:430.8px;top:359.2px;width:9.2px;height:26.9px;background:#3b3768;"></div>
<div style="left:506.0px;top:359.2px;width:9.2px;height:32.2px;background:#3b3768;border-radius:0 0 4.600px 4.600px;"></div>
<svg style="left:507px;top:383px" width="8" height="8" viewBox="507 383 8 8"><circle cx="510.6" cy="386.1" r="2.1" fill="#1f1e3c"/></svg>
<div style="left:581.2px;top:359.2px;width:9.2px;height:32.2px;background:#3b3768;border-radius:0 0 4.600px 4.600px;"></div>
<svg style="left:582px;top:383px" width="8" height="8" viewBox="582 383 8 8"><circle cx="585.8" cy="386.1" r="2.1" fill="#1f1e3c"/></svg>
<svg style="left:319px;top:355px" width="8" height="8" viewBox="319 355 8 8"><circle cx="322.6" cy="359.2" r="2.4" fill="#423e76"/></svg>
<svg style="left:338px;top:355px" width="8" height="8" viewBox="338 355 8 8"><circle cx="341.4" cy="359.2" r="2.4" fill="#423e76"/></svg>
<svg style="left:375px;top:355px" width="8" height="8" viewBox="375 355 8 8"><circle cx="379.0" cy="359.2" r="2.4" fill="#423e76"/></svg>
<svg style="left:394px;top:355px" width="8" height="8" viewBox="394 355 8 8"><circle cx="397.8" cy="359.2" r="2.4" fill="#423e76"/></svg>
<svg style="left:413px;top:355px" width="8" height="8" viewBox="413 355 8 8"><circle cx="416.6" cy="359.2" r="2.4" fill="#423e76"/></svg>
<svg style="left:74px;top:382px" width="8" height="8" viewBox="74 382 8 8"><circle cx="78.2" cy="386.1" r="2.4" fill="#423e76"/></svg>
<svg style="left:93px;top:382px" width="8" height="8" viewBox="93 382 8 8"><circle cx="97.0" cy="386.1" r="2.4" fill="#423e76"/></svg>
<svg style="left:112px;top:382px" width="8" height="8" viewBox="112 382 8 8"><circle cx="115.8" cy="386.1" r="2.4" fill="#423e76"/></svg>
<svg style="left:150px;top:382px" width="8" height="8" viewBox="150 382 8 8"><circle cx="153.4" cy="386.1" r="2.4" fill="#423e76"/></svg>
<svg style="left:168px;top:382px" width="8" height="8" viewBox="168 382 8 8"><circle cx="172.2" cy="386.1" r="2.4" fill="#423e76"/></svg>
<svg style="left:187px;top:382px" width="8" height="8" viewBox="187 382 8 8"><circle cx="191.0" cy="386.1" r="2.4" fill="#423e76"/></svg>
<svg style="left:225px;top:382px" width="8" height="8" viewBox="225 382 8 8"><circle cx="228.6" cy="386.1" r="2.4" fill="#423e76"/></svg>
<svg style="left:244px;top:382px" width="8" height="8" viewBox="244 382 8 8"><circle cx="247.4" cy="386.1" r="2.4" fill="#423e76"/></svg>
<svg style="left:262px;top:382px" width="8" height="8" viewBox="262 382 8 8"><circle cx="266.2" cy="386.1" r="2.4" fill="#423e76"/></svg>
<svg style="left:488px;top:382px" width="8" height="8" viewBox="488 382 8 8"><circle cx="491.8" cy="386.1" r="2.4" fill="#423e76"/></svg>
<svg style="left:526px;top:382px" width="8" height="8" viewBox="526 382 8 8"><circle cx="529.4" cy="386.1" r="2.4" fill="#423e76"/></svg>
<svg style="left:544px;top:382px" width="8" height="8" viewBox="544 382 8 8"><circle cx="548.2" cy="386.1" r="2.4" fill="#423e76"/></svg>
<svg style="left:563px;top:382px" width="8" height="8" viewBox="563 382 8 8"><circle cx="567.0" cy="386.1" r="2.4" fill="#423e76"/></svg>
<svg style="left:601px;top:382px" width="8" height="8" viewBox="601 382 8 8"><circle cx="604.6" cy="386.1" r="2.4" fill="#423e76"/></svg>
<svg style="left:620px;top:382px" width="8" height="8" viewBox="620 382 8 8"><circle cx="623.4" cy="386.1" r="2.4" fill="#423e76"/></svg>
<svg style="left:638px;top:382px" width="8" height="8" viewBox="638 382 8 8"><circle cx="642.2" cy="386.1" r="2.4" fill="#423e76"/></svg>
<div style="left:54.8px;top:354.3px;width:65.5px;height:9.8px;background:#ff5470;border-radius:4.900px;"></div>
<div class="t" style="left:60.3px;top:355.9px;height:6.7px;line-height:6.7px;font-size:5.6px;color:#ffd3da;font-weight:700;letter-spacing:0.28px;">Cm11</div>
<div style="left:130.0px;top:354.3px;width:178.2px;height:9.8px;background:#ff5470;border-radius:4.900px;"></div>
<div class="t" style="left:135.5px;top:355.9px;height:6.7px;line-height:6.7px;font-size:5.6px;color:#ffd3da;font-weight:700;letter-spacing:0.50px;">Fm11</div>
<div style="left:430.8px;top:354.3px;width:178.9px;height:9.8px;background:#ff5470;border-radius:4.900px;"></div>
<div class="t" style="left:436.3px;top:355.9px;height:6.7px;line-height:6.7px;font-size:5.6px;color:#ffd3da;font-weight:700;letter-spacing:0.28px;">Cm11</div>
<div style="left:618.5px;top:354.3px;width:28.6px;height:9.8px;background:#ff5470;border-radius:4.900px;"></div>
<div class="t" style="left:624.0px;top:355.9px;height:6.7px;line-height:6.7px;font-size:5.6px;color:#ffd3da;font-weight:700;letter-spacing:0.50px;">Fm11</div>
<div style="left:280.2px;top:381.2px;width:197.7px;height:9.8px;background:#06d6a0;border-radius:4.900px;"></div>
<div class="t" style="left:285.7px;top:382.8px;height:6.7px;line-height:6.7px;font-size:5.6px;color:#04b98b;font-weight:700;letter-spacing:0.02px;">G#</div>
<svg style="left:26px;top:348px" width="22" height="20" viewBox="26 348 22 20"><g fill="#fff"><rect x="36" y="351.300" width="1.200" height="3.600"/><circle cx="36.600" cy="351" r="0.900"/><rect x="28.200" y="354.600" width="16.600" height="9.100" rx="2.200"/><path d="M31.200 364.200 H41.900 L40.500 367 H32.600 Z" fill="#c8c6d8"/></g><g fill="#201e3d"><circle cx="32.800" cy="358.200" r="1.400"/><circle cx="40.400" cy="358.200" r="1.400"/></g></svg>
<svg style="left:26px;top:376px" width="20" height="21" viewBox="26 376 20 21"><path d="M36.200 378.400 c4 0 6.500 2.700 6.500 6.200 c0 2.400 -1 4 -2.200 5.200 v5 h-6.800 v-2.400 h-2 c-0.900 0 -1.400 -0.600 -1.400 -1.400 v-1.800 l-1.500 -0.500 c-0.400 -0.200 -0.500 -0.500 -0.300 -0.900 l1.700 -2.800 c0 -3.900 2.500 -6.600 6 -6.600 z" fill="#fff"/></svg>
<div style="left:659.0px;top:355.3px;width:2.1px;height:2.1px;background:#cfc8f5;border-radius:0.500px;"></div>
<div style="left:662.8px;top:355.3px;width:2.1px;height:2.1px;background:#cfc8f5;border-radius:0.500px;"></div>
<div style="left:659.0px;top:358.4px;width:2.1px;height:2.1px;background:#cfc8f5;border-radius:0.500px;"></div>
<div style="left:662.8px;top:358.4px;width:2.1px;height:2.1px;background:#cfc8f5;border-radius:0.500px;"></div>
<div style="left:659.0px;top:361.5px;width:2.1px;height:2.1px;background:#cfc8f5;border-radius:0.500px;"></div>
<div style="left:662.8px;top:361.5px;width:2.1px;height:2.1px;background:#cfc8f5;border-radius:0.500px;"></div>
<svg style="left:673px;top:353px" width="9" height="12" viewBox="673 353 9 12"><g fill="none" stroke="#3b3768" stroke-width="0.900"><rect x="674.4" y="357.0" width="5.200" height="7" rx="0.800"/><path d="M673.7 356.6 H680.3 M676.0 355.6 H678.0"/></g></svg>
<div style="left:659.0px;top:382.5px;width:2.1px;height:2.1px;background:#cfc8f5;border-radius:0.500px;"></div>
<div style="left:662.8px;top:382.5px;width:2.1px;height:2.1px;background:#cfc8f5;border-radius:0.500px;"></div>
<div style="left:659.0px;top:385.6px;width:2.1px;height:2.1px;background:#cfc8f5;border-radius:0.500px;"></div>
<div style="left:662.8px;top:385.6px;width:2.1px;height:2.1px;background:#cfc8f5;border-radius:0.500px;"></div>
<div style="left:659.0px;top:388.7px;width:2.1px;height:2.1px;background:#cfc8f5;border-radius:0.500px;"></div>
<div style="left:662.8px;top:388.7px;width:2.1px;height:2.1px;background:#cfc8f5;border-radius:0.500px;"></div>
<svg style="left:673px;top:380px" width="9" height="12" viewBox="673 380 9 12"><g fill="none" stroke="#3b3768" stroke-width="0.900"><rect x="674.4" y="384.2" width="5.200" height="7" rx="0.800"/><path d="M673.7 383.8 H680.3 M676.0 382.8 H678.0"/></g></svg>
<svg style="left:394px;top:400px" width="8" height="8" viewBox="394 400 8 8"><circle cx="397.8" cy="403.6" r="2.3" fill="#fff"/></svg>
<div class="key" style="left:113.8px;top:446.2px;width:28.0px;height:55.8px;"></div>
<div class="t" style="left:123.8px;top:489.4px;height:6.7px;line-height:6.7px;font-size:5.6px;color:#8781b6;font-weight:700;letter-spacing:0.83px;">C4</div>
<div class="key" style="left:143.8px;top:446.2px;width:28.0px;height:55.8px;"></div>
<div class="t" style="left:153.8px;top:489.4px;height:6.7px;line-height:6.7px;font-size:5.6px;color:#8781b6;font-weight:700;letter-spacing:0.83px;">D4</div>
<div class="key" style="left:173.7px;top:446.2px;width:28.0px;height:55.8px;"></div>
<div class="t" style="left:183.7px;top:489.4px;height:6.7px;line-height:6.7px;font-size:5.6px;color:#8781b6;font-weight:700;letter-spacing:1.14px;">E4</div>
<div class="key" style="left:203.7px;top:446.2px;width:28.0px;height:55.8px;"></div>
<div class="t" style="left:213.7px;top:489.4px;height:6.7px;line-height:6.7px;font-size:5.6px;color:#8781b6;font-weight:700;letter-spacing:1.48px;">F4</div>
<div class="key" style="left:233.6px;top:446.2px;width:28.0px;height:55.8px;"></div>
<div class="t" style="left:243.6px;top:489.4px;height:6.7px;line-height:6.7px;font-size:5.6px;color:#8781b6;font-weight:700;letter-spacing:0.52px;">G4</div>
<div class="key on" style="left:263.6px;top:446.2px;width:28.0px;height:55.8px;"></div>
<div class="t" style="left:273.6px;top:489.4px;height:6.7px;line-height:6.7px;font-size:5.6px;color:#fff;font-weight:700;letter-spacing:0.83px;">A4</div>
<div class="key" style="left:293.6px;top:446.2px;width:28.0px;height:55.8px;"></div>
<div class="t" style="left:303.6px;top:489.4px;height:6.7px;line-height:6.7px;font-size:5.6px;color:#8781b6;font-weight:700;letter-spacing:0.83px;">B4</div>
<div class="key on" style="left:323.5px;top:446.2px;width:28.0px;height:55.8px;"></div>
<div class="t" style="left:333.5px;top:489.4px;height:6.7px;line-height:6.7px;font-size:5.6px;color:#fff;font-weight:700;letter-spacing:0.83px;">C5</div>
<div class="key" style="left:353.5px;top:446.2px;width:28.0px;height:55.8px;"></div>
<div class="t" style="left:363.5px;top:489.4px;height:6.7px;line-height:6.7px;font-size:5.6px;color:#8781b6;font-weight:700;letter-spacing:0.83px;">D5</div>
<div class="key" style="left:383.4px;top:446.2px;width:28.0px;height:55.8px;"></div>
<div class="t" style="left:393.4px;top:489.4px;height:6.7px;line-height:6.7px;font-size:5.6px;color:#8781b6;font-weight:700;letter-spacing:1.14px;">E5</div>
<div class="key" style="left:413.4px;top:446.2px;width:28.0px;height:55.8px;"></div>
<div class="t" style="left:423.4px;top:489.4px;height:6.7px;line-height:6.7px;font-size:5.6px;color:#8781b6;font-weight:700;letter-spacing:1.48px;">F5</div>
<div class="key on" style="left:443.4px;top:446.2px;width:28.0px;height:55.8px;"></div>
<div class="t" style="left:453.4px;top:489.4px;height:6.7px;line-height:6.7px;font-size:5.6px;color:#fff;font-weight:700;letter-spacing:0.52px;">G5</div>
<div class="key" style="left:473.3px;top:446.2px;width:28.0px;height:55.8px;"></div>
<div class="t" style="left:483.3px;top:489.4px;height:6.7px;line-height:6.7px;font-size:5.6px;color:#8781b6;font-weight:700;letter-spacing:0.83px;">A5</div>
<div class="key" style="left:503.3px;top:446.2px;width:28.0px;height:55.8px;"></div>
<div class="t" style="left:513.3px;top:489.4px;height:6.7px;line-height:6.7px;font-size:5.6px;color:#8781b6;font-weight:700;letter-spacing:0.83px;">B5</div>
<div class="key" style="left:533.2px;top:446.2px;width:28.0px;height:55.8px;"></div>
<div class="t" style="left:543.2px;top:489.4px;height:6.7px;line-height:6.7px;font-size:5.6px;color:#8781b6;font-weight:700;letter-spacing:0.83px;">C6</div>
<div class="key on" style="left:563.2px;top:446.2px;width:28.0px;height:55.8px;"></div>
<div class="t" style="left:573.2px;top:489.4px;height:6.7px;line-height:6.7px;font-size:5.6px;color:#fff;font-weight:700;letter-spacing:0.83px;">D6</div>
<div class="bk" style="left:129.2px;top:416.1px;width:26.8px;height:26.8px;"></div>
<div class="bk" style="left:160.2px;top:416.1px;width:26.8px;height:26.8px;"></div>
<div class="bk" style="left:218.5px;top:416.1px;width:26.8px;height:26.8px;"></div>
<div class="bk on" style="left:249.3px;top:416.1px;width:26.8px;height:26.8px;"></div>
<div class="bk" style="left:279.5px;top:416.1px;width:26.8px;height:26.8px;"></div>
<div class="bk" style="left:338.9px;top:416.1px;width:26.8px;height:26.8px;"></div>
<div class="bk on" style="left:369.9px;top:416.1px;width:26.8px;height:26.8px;"></div>
<div class="bk" style="left:428.3px;top:416.1px;width:26.8px;height:26.8px;"></div>
<div class="bk" style="left:459.0px;top:416.1px;width:26.8px;height:26.8px;"></div>
<div class="bk" style="left:489.2px;top:416.1px;width:26.8px;height:26.8px;"></div>
<div class="bk" style="left:548.6px;top:416.1px;width:26.8px;height:26.8px;"></div>
<svg style="left:92px;top:422px" width="14" height="17" viewBox="92 422 14 17"><path d="M103.800 423.200 V437 L93.700 430.100 Z" fill="#3f3b74"/></svg>
<svg style="left:595px;top:422px" width="14" height="17" viewBox="595 422 14 17"><path d="M596.400 423.200 V437 L606.600 430.100 Z" fill="#3f3b74"/></svg>
<div style="left:28.9px;top:455.2px;width:63.4px;height:20.8px;border-radius:11px;background:linear-gradient(90deg,#6d52b4,#4c3d9e);"></div>
<div style="left:30.2px;top:456.5px;width:60.8px;height:18.2px;border-radius:10px;background:#201d3b;"></div>
<div class="t" style="left:54.0px;top:460.2px;height:10.3px;line-height:10.3px;font-size:8.6px;color:#fff;font-weight:700;letter-spacing:1.12px;">G#</div>
<div class="t" style="left:44.7px;top:489.8px;height:7.4px;line-height:7.4px;font-size:6.2px;color:#a59ecf;font-weight:700;letter-spacing:0.41px;">PRESETS</div>
<div style="left:606.2px;top:452.6px;width:63.0px;height:20.2px;border:1.400px solid #5040a6;border-radius:10px;"></div>
<svg style="left:608px;top:454px" width="16" height="16" viewBox="608 454 16 16"><circle cx="616.3" cy="462.4" r="7" fill="#fff"/><circle cx="612.26" cy="461.23" r="0.750" fill="#221f3f"/><circle cx="613.83" cy="459.18" r="0.750" fill="#221f3f"/><circle cx="616.30" cy="458.40" r="0.750" fill="#221f3f"/><circle cx="618.77" cy="459.18" r="0.750" fill="#221f3f"/><circle cx="620.34" cy="461.23" r="0.750" fill="#221f3f"/><rect x="614.9" y="467.4" width="2.800" height="2.500" rx="1" fill="#221f3f"/></svg>
<div class="t" style="left:628.3px;top:460.1px;height:5.0px;line-height:5.0px;font-size:4.2px;color:#f3f0ff;font-weight:700;letter-spacing:-0.15px;">DRAG CHORD</div>
<div style="left:606.2px;top:483.5px;width:63.0px;height:20.2px;border:1.400px solid #5040a6;border-radius:10px;"></div>
<svg style="left:608px;top:485px" width="16" height="16" viewBox="608 485 16 16"><circle cx="616.3" cy="493.3" r="7" fill="#fff"/><circle cx="612.26" cy="492.13" r="0.750" fill="#221f3f"/><circle cx="613.83" cy="490.08" r="0.750" fill="#221f3f"/><circle cx="616.30" cy="489.30" r="0.750" fill="#221f3f"/><circle cx="618.77" cy="490.08" r="0.750" fill="#221f3f"/><circle cx="620.34" cy="492.13" r="0.750" fill="#221f3f"/><rect x="614.9" y="498.3" width="2.800" height="2.500" rx="1" fill="#221f3f"/></svg>
<div class="t" style="left:628.3px;top:491.0px;height:5.0px;line-height:5.0px;font-size:4.2px;color:#f3f0ff;font-weight:700;letter-spacing:-0.16px;">DRAG SEQ</div>
</div></div></body></html>
